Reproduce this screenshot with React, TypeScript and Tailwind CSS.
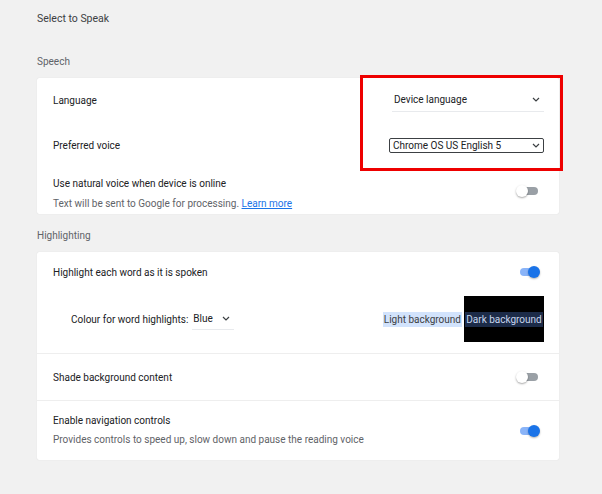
import React from 'react';

const font = { fontFamily: 'Roboto, "Noto Sans", sans-serif' };

function Toggle({ on }: { on?: boolean }) {
  return (
    <span className="relative inline-block h-[12px] w-[24px]">
      <span
        className={
          on
            ? 'absolute left-[4px] top-[2px] h-[8px] w-[18px] rounded-full bg-[#8ab4f8]'
            : 'absolute left-[4px] top-[2px] h-[8px] w-[18px] rounded-full bg-[#9aa0a6]'
        }
      />
      <span
        className={
          on
            ? 'absolute right-0 top-0 h-[12px] w-[12px] rounded-full bg-[#1a73e8] shadow-[0_1px_2px_rgba(0,0,0,0.3)]'
            : 'absolute left-0 top-0 h-[12px] w-[12px] rounded-full bg-white shadow-[0_1px_2px_rgba(0,0,0,0.35)]'
        }
      />
    </span>
  );
}

function Chevron({ className }: { className?: string }) {
  return (
    <svg width="8" height="5" viewBox="0 0 8 5" className={className}>
      <path d="M1 1l3 3 3-3" fill="none" stroke="#3c4043" strokeWidth="1.2" />
    </svg>
  );
}

export default function App() {
  return (
    <div style={font} className="h-[494px] w-[602px] bg-[#f1f1f1] text-[10px] text-[#202124]">
      <div className="ml-[37px] w-[522px]">
        <div className="pt-[12px] text-[10.5px] leading-[14px] text-[#3c4043]">Select to Speak</div>

        <div className="pt-[29px] leading-[14px] text-[#5f6368]">Speech</div>
        <div className="relative mt-[9px] rounded-[2px] bg-white shadow-[0_0_1px_rgba(0,0,0,0.15)]">
          <div className="flex h-[44px] items-center justify-between pl-[16px] pr-[15px]">
            <span>Language</span>
            <div className="flex w-[152px] items-center justify-between border-b border-[#e8eaed] pb-[4px] pl-[2px] pr-[4px] pt-[4px]">
              <span>Device language</span>
              <Chevron />
            </div>
          </div>
          <div className="flex h-[46px] items-center justify-between pl-[16px] pr-[15px]">
            <span>Preferred voice</span>
            <div className="mt-[1px] flex h-[15px] w-[155px] items-center justify-between rounded-[2px] border border-[#3c4043] pl-[3px] pr-[3px] leading-none">
              <span>Chrome OS US English 5</span>
              <Chevron />
            </div>
          </div>
          <div className="flex items-start justify-between pb-[3px] pl-[16px] pr-[19px] pt-[9px]">
            <div className="flex flex-col gap-[6px] leading-[14px]">
              <span>Use natural voice when device is online</span>
              <span className="text-[#5f6368]">
                Text will be sent to Google for processing.{' '}
                <span className="text-[#1a73e8] underline">Learn more</span>
              </span>
            </div>
            <div className="mt-[8px]">
              <Toggle />
            </div>
          </div>
          <div className="pointer-events-none absolute left-[323px] top-[-3px] h-[96px] w-[203px] border-[3px] border-[#ee0000]" />
        </div>

        <div className="pt-[15px] leading-[14px] text-[#5f6368]">Highlighting</div>
        <div className="mt-[9px] rounded-[2px] bg-white shadow-[0_0_1px_rgba(0,0,0,0.15)]">
          <div className="flex h-[40px] items-center justify-between pl-[16px] pr-[19px]">
            <span>Highlight each word as it is spoken</span>
            <Toggle on />
          </div>
          <div className="flex items-center justify-between pb-[11px] pl-[34px] pr-[15px] pt-[4px]">
            <div className="flex items-center gap-[4px]">
              <span>Colour for word highlights:</span>
              <div className="flex w-[42px] items-center justify-between border-b border-[#e8eaed] pb-[3px] pl-[1px] pr-[4px] pt-[3px]">
                <span>Blue</span>
                <Chevron />
              </div>
            </div>
            <div className="flex items-center gap-[2px] whitespace-nowrap">
              <span className="bg-[#d2e3fc] px-[1px] text-[#3c4043]">Light background</span>
              <div className="flex h-[46px] w-[80px] items-center justify-center bg-black">
                <span className="bg-[#1c2b48] px-[1px] text-[#c8d6ee]">Dark background</span>
              </div>
            </div>
          </div>
          <div className="h-px bg-[#eeeeee]" />
          <div className="flex h-[46px] items-center justify-between pl-[16px] pr-[19px]">
            <span>Shade background content</span>
            <Toggle />
          </div>
          <div className="h-px bg-[#eeeeee]" />
          <div className="flex h-[59px] items-center justify-between pl-[16px] pr-[19px]">
            <div className="flex flex-col gap-[5px] leading-[14px]">
              <span>Enable navigation controls</span>
              <span className="text-[#5f6368]">Provides controls to speed up, slow down and pause the reading voice</span>
            </div>
            <Toggle on />
          </div>
        </div>
      </div>
    </div>
  );
}
